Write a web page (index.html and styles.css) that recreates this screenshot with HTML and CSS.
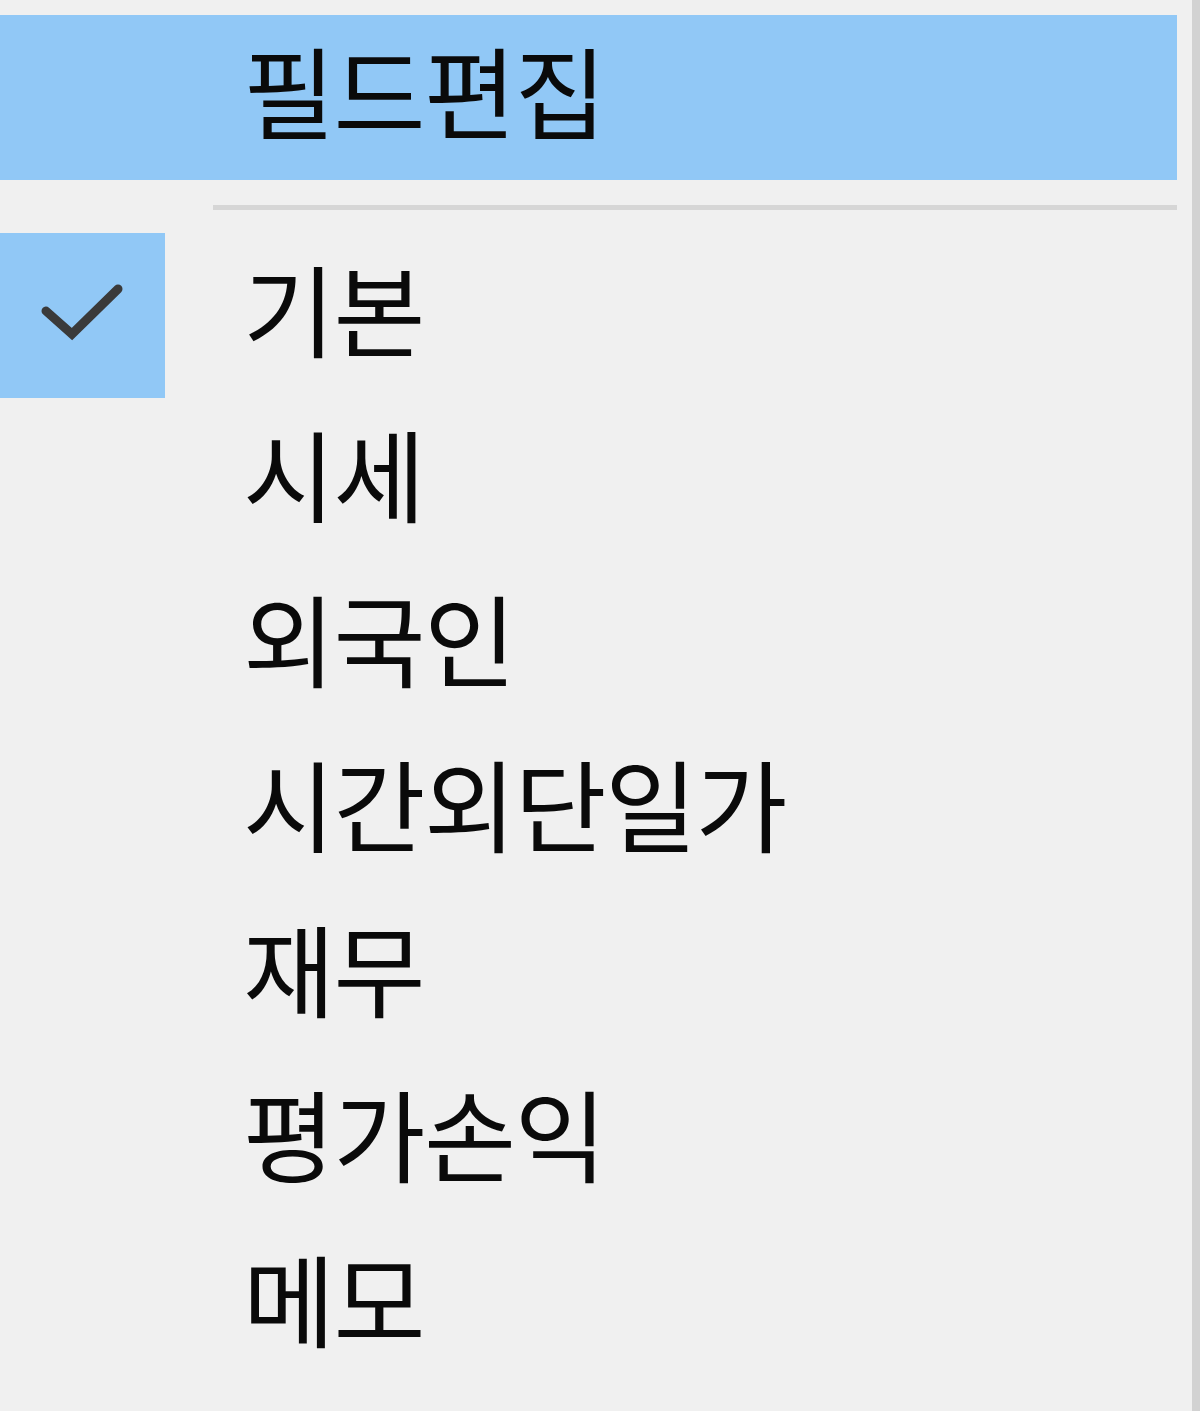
FILE: index.html
```html
<!DOCTYPE html>
<html lang="ko">
<head>
    <meta charset="UTF-8">
    <title>필드 메뉴</title>
    <link rel="stylesheet" href="styles.css">
</head>
<body>
    <div class="menu">
        <div class="item active">
            <span class="check"></span>
            <span class="label">필드편집</span>
        </div>
        <div class="separator"></div>
        <div class="item">
            <span class="check checked">
                <svg width="165" height="165" viewBox="0 0 165 165">
                    <polyline points="46,78 72,101 118,56" fill="none" stroke="#3a3a3a" stroke-width="9" stroke-linecap="round"/>
                </svg>
            </span>
            <span class="label">기본</span>
        </div>
        <div class="item"><span class="check"></span><span class="label">시세</span></div>
        <div class="item"><span class="check"></span><span class="label">외국인</span></div>
        <div class="item"><span class="check"></span><span class="label">시간외단일가</span></div>
        <div class="item"><span class="check"></span><span class="label">재무</span></div>
        <div class="item"><span class="check"></span><span class="label">평가손익</span></div>
        <div class="item"><span class="check"></span><span class="label">메모</span></div>
    </div>
</body>
</html>
```

FILE: styles.css
```css
body {
    margin: 0;
    background-color: #f0f0f0;
    font-family: "Noto Sans CJK KR", "Noto Sans", sans-serif;
}
.menu {
    box-sizing: border-box;
    width: 1200px;
    height: 1411px;
    padding: 15px 15px 0 0;
    border-right: 8px solid #d2d2d2;
    display: flex;
    flex-direction: column;
}
.item {
    height: 165px;
    display: flex;
    align-items: center;
}
.item.active {
    background-color: #91c8f6;
}
.check {
    width: 165px;
    height: 165px;
    flex-shrink: 0;
}
.check svg {
    display: block;
}
.check.checked {
    background-color: #91c8f6;
}
.label {
    margin-left: 78px;
    padding-bottom: 18px;
    font-size: 100px;
    letter-spacing: -1.5px;
    color: #0a0a0a;
    line-height: 1;
}
.separator {
    height: 53px;
    margin-left: 213px;
    display: flex;
    align-items: center;
}
.separator::before {
    content: "";
    flex: 1;
    height: 5px;
    margin-top: 2px;
    background-color: #d6d6d6;
}
```
